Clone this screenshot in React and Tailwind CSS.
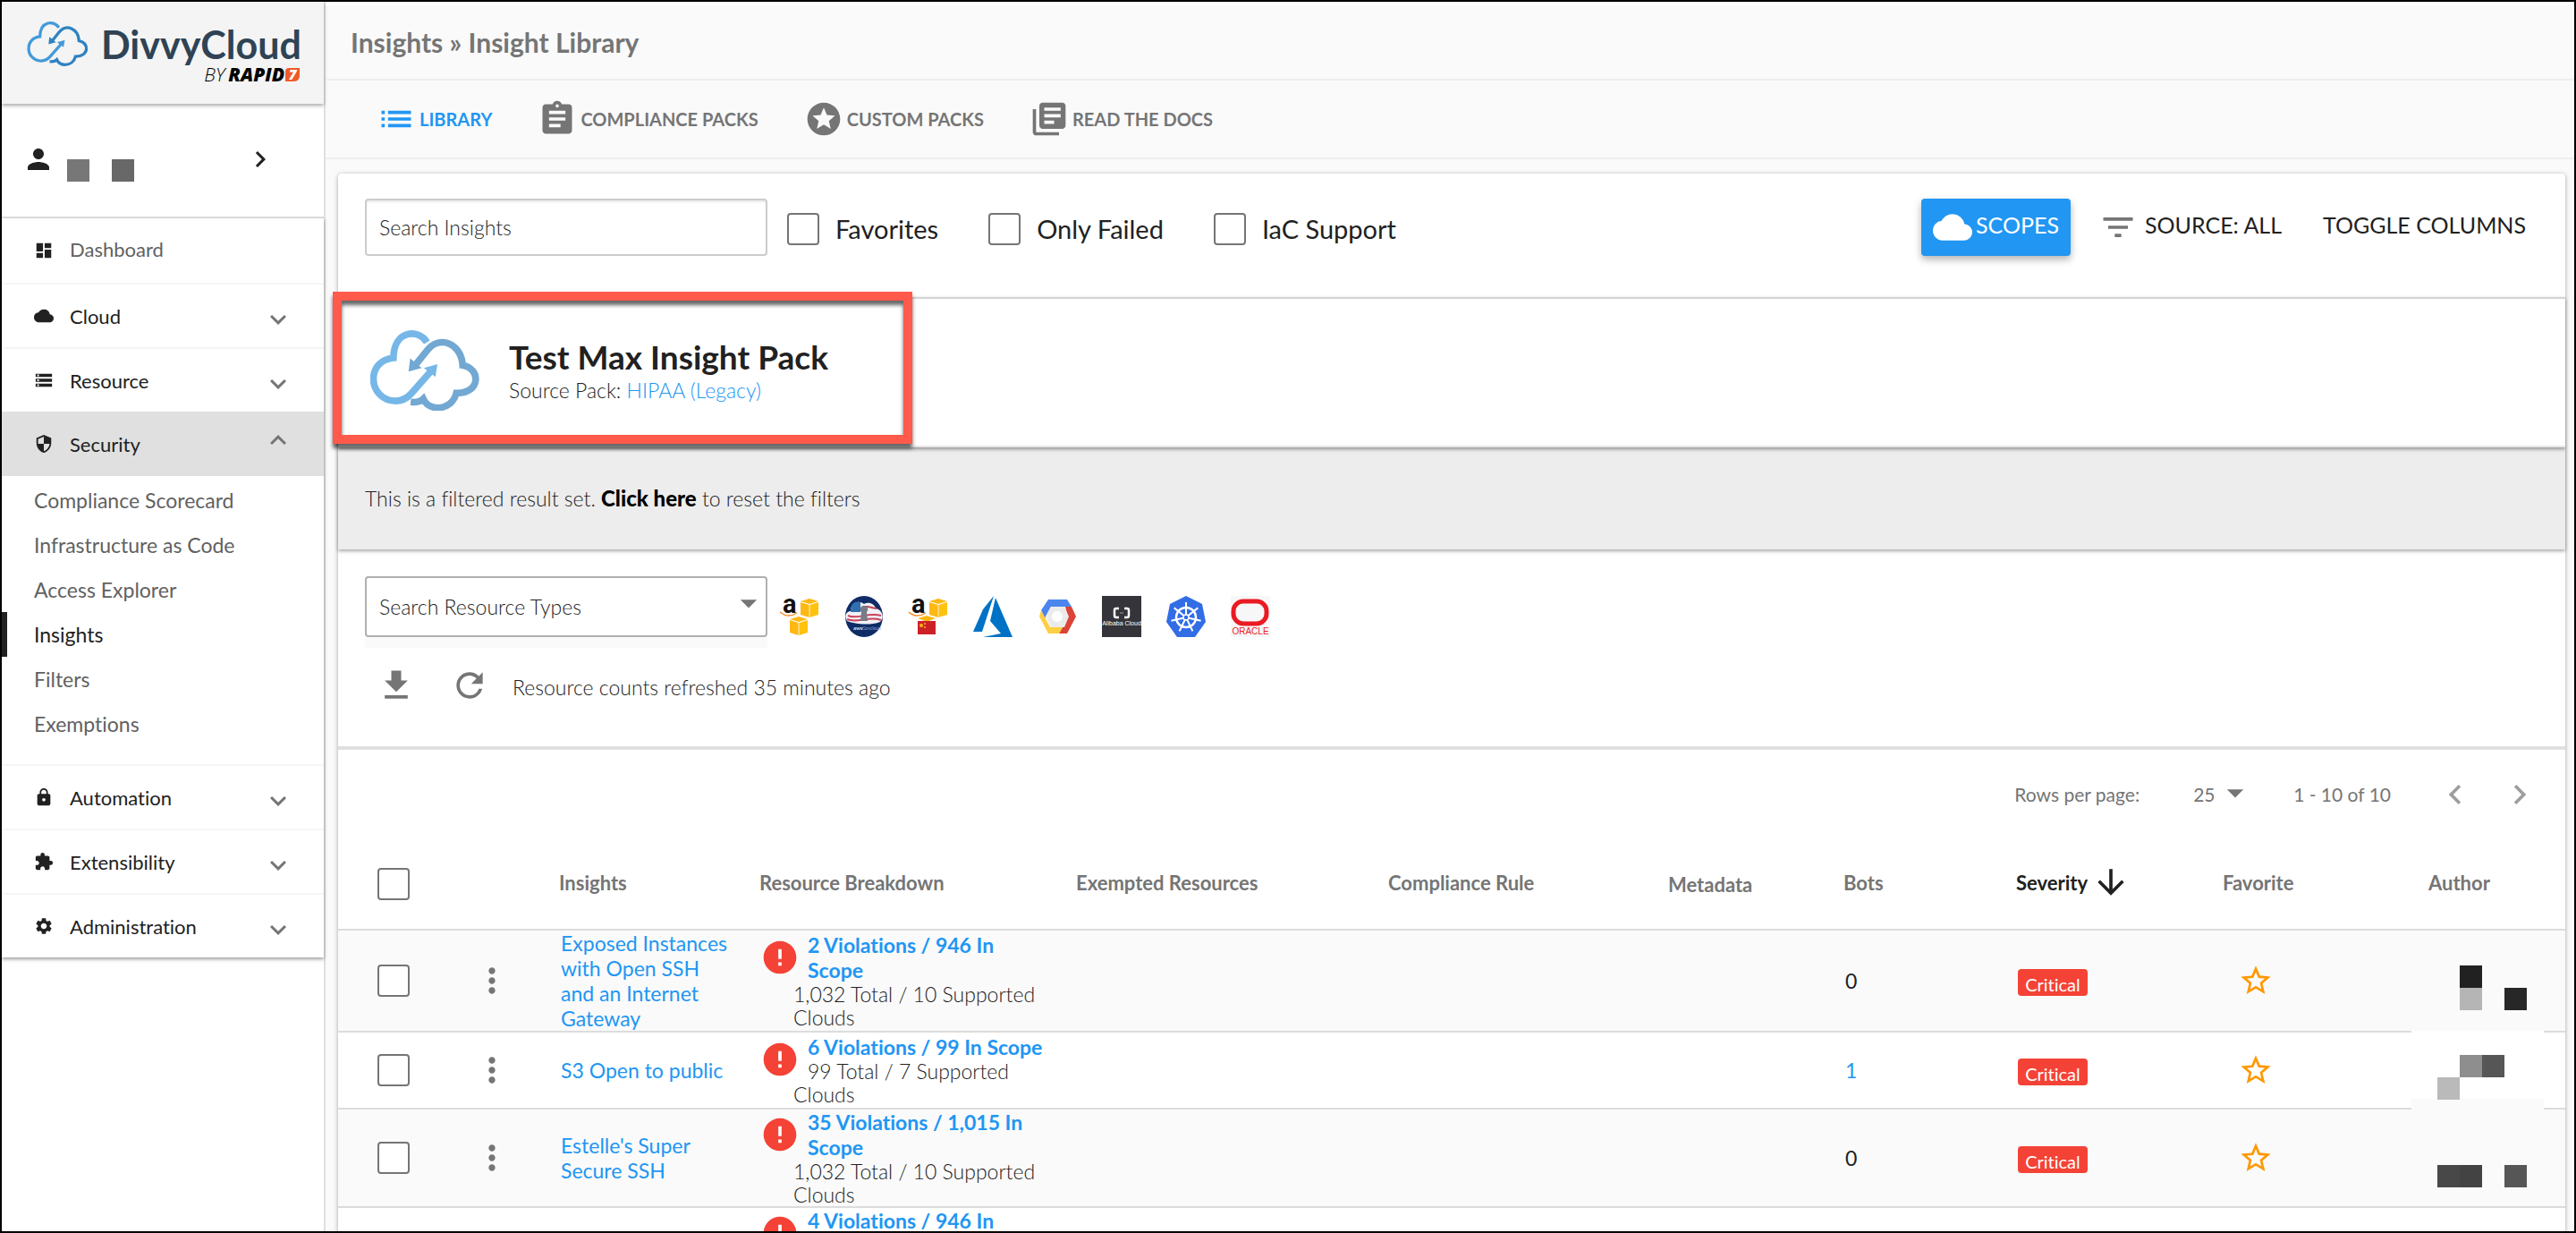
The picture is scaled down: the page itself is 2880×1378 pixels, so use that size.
import { useState } from "react";
import {
  MdArrowDownward,
  MdArrowDropDown,
  MdAssignment,
  MdChevronLeft,
  MdChevronRight,
  MdCloud,
  MdDashboard,
  MdError,
  MdExpandLess,
  MdExpandMore,
  MdExtension,
  MdFileDownload,
  MdFilterList,
  MdLibraryBooks,
  MdList,
  MdLock,
  MdMoreVert,
  MdPerson,
  MdRefresh,
  MdSecurity,
  MdSettings,
  MdStarBorder,
  MdStars,
  MdStorage,
} from "react-icons/md";

const securityLinks = [
  "Compliance Scorecard",
  "Infrastructure as Code",
  "Access Explorer",
  "Insights",
  "Filters",
  "Exemptions",
];

const tabs = [
  { label: "LIBRARY", Icon: MdList, active: true },
  { label: "COMPLIANCE PACKS", Icon: MdAssignment },
  { label: "CUSTOM PACKS", Icon: MdStars },
  { label: "READ THE DOCS", Icon: MdLibraryBooks },
];

const insights = [
  {
    name: "Exposed Instances with Open SSH and an Internet Gateway",
    violations: "2 Violations / 946 In Scope",
    total: "1,032 Total / 10 Supported Clouds",
    bots: 0,
  },
  {
    name: "S3 Open to public",
    violations: "6 Violations / 99 In Scope",
    total: "99 Total / 7 Supported Clouds",
    bots: 1,
  },
  {
    name: "Estelle's Super Secure SSH",
    violations: "35 Violations / 1,015 In Scope",
    total: "1,032 Total / 10 Supported Clouds",
    bots: 0,
  },
  {
    name: "",
    violations: "4 Violations / 946 In Scope",
    total: "1,032 Total / 10 Supported Clouds",
    bots: 0,
  },
];

function CloudLogo({ className, left, right, strokeWidth }) {
  return (
    <svg className={className} viewBox="88 68 208 154" fill="none" strokeWidth={strokeWidth} aria-hidden="true">
      <path d="M196 92 C180 66 133 68 132 122 C109 124 94 140 94 162 C94 185 112 204 136 204 C149 204 158 199 166 190 L203 148" stroke={left} />
      <path d="M216 134 L212 158 L190 141 Z" fill={left} />
      <path d="M172 138 L196 108 C221 76 262 96 264 136 C299 142 299 190 252 189 C248 206 234 217 217 217 C204 217 194 211 189 200 C183 206 175 207 165 206" stroke={right} />
      <path d="M161 148 L164 123 L186 141 Z" fill={right} />
    </svg>
  );
}

function Cube({ x, y }) {
  return (
    <g transform={`translate(${x} ${y})`}>
      <path d="M10 0 L20 3 L10 6 L0 3 Z" fill="#fdb813" />
      <path d="M0 4 L9.6 7 V21 L0 18 Z" fill="#fdb813" />
      <path d="M20 4 L10.4 7 V21 L20 18 Z" fill="#ffc20e" />
    </g>
  );
}

function AmazonMark() {
  return (
    <>
      <text x="3" y="19" fontSize="29" fontWeight="700" fontFamily="Roboto, sans-serif" fill="#111">a</text>
      <path d="M0 18 C6 23 13 23 19 19" stroke="#f08a24" strokeWidth="1.5" fill="none" />
    </>
  );
}

function AwsIcon() {
  return (
    <svg className="w-11 h-[46px] overflow-visible" viewBox="0 0 44 46">
      <AmazonMark />
      <Cube x={23} y={3} />
      <Cube x={11} y={23} />
    </svg>
  );
}

function AwsChinaIcon() {
  return (
    <svg className="w-11 h-[46px] overflow-visible" viewBox="0 0 44 46">
      <AmazonMark />
      <Cube x={23} y={3} />
      <path d="M20 22 L30 25 L20 29 L10 25 Z" fill="#fdb813" />
      <path d="M10 28 H30 V43 H10 Z" fill="#cd2128" />
      <circle cx="14" cy="33" r="2" fill="#fdb813" />
      <circle cx="18" cy="31" r="1" fill="#fdb813" />
      <circle cx="18" cy="35" r="1" fill="#fdb813" />
    </svg>
  );
}

function GovCloudIcon() {
  return (
    <svg className="w-11 h-[46px]" viewBox="0 0 44 46">
      <ellipse cx="22" cy="23" rx="21" ry="23" fill="#0f2c66" />
      <path d="M3 28 C-1 22 3 17 7 17 C7 8 15 4 22 9 C27 6 34 9 35 14 C43 16 45 24 40 29 C30 33 12 32 3 28 Z" fill="#f1f1f6" />
      <path d="M7 17 C7 9 12 6 18 7 V18 H7 Z" fill="#2f6fae" />
      <path d="M20 13 C26 10 31 14 36 14 M4 22 C14 27 26 18 41 22 M3 26 C14 31 28 22 41 27" stroke="#c9425a" strokeWidth="2" fill="none" />
      <path d="M22 11 a4 4 0 0 1 3 7 L26 28 H18 L19 18 A4 4 0 0 1 22 11 Z" fill="#777b84" />
      <text x="10" y="38" fontSize="6" fontWeight="700" fontFamily="Lato, sans-serif" fill="#dfe5f2">aws</text>
      <text x="20" y="38" fontSize="5" fontFamily="Lato, sans-serif" fill="#8fa3cc">Govcloud</text>
    </svg>
  );
}

function AzureIcon() {
  return (
    <svg className="w-11 h-[46px]" viewBox="0 0 44 46">
      <path d="M23 0 L10 40 H0 L11 15 Z" fill="#0072c6" />
      <path d="M25 2 L44 46 H11 L31 42 L19 28 Z" fill="#0072c6" />
    </svg>
  );
}

function GoogleCloudIcon() {
  return (
    <svg className="w-11 h-[46px]" viewBox="0 0 44 46">
      <path d="M12 4 H33 L38 12 H15 L8 25 L4 16 Z" fill="#4a86ee" />
      <path d="M31 12 H38 L43 23 L33 42 H24 L34 24 Z" fill="#db4437" />
      <path d="M4 16 L14 35 H28 L24 42 H12 L2 23 Z" fill="#fdcf41" />
      <path d="M15 12 H30 L35 23 L30 35 H15 L9 23 Z" fill="#ebebeb" />
      <circle cx="22" cy="23" r="6" fill="#fff" />
    </svg>
  );
}

function AlibabaIcon() {
  return (
    <svg className="w-11 h-[46px]" viewBox="0 0 44 46">
      <path d="M0 0 H44 V46 H0 Z" fill="#34343a" />
      <path d="M19 14 H16 Q14 14 14 16 V22 Q14 24 16 24 H19 M25 14 H28 Q30 14 30 16 V22 Q30 24 28 24 H25" stroke="#fff" strokeWidth="2.5" fill="none" />
      <path d="M20 19 H24" stroke="#999" strokeWidth="1" />
      <text x="22" y="33" fontSize="7" textAnchor="middle" fontFamily="Liberation Sans, sans-serif" fill="#fff">Alibaba Cloud</text>
    </svg>
  );
}

function KubernetesIcon() {
  const spokes = [0, 51.4, 102.9, 154.3, 205.7, 257.1, 308.6];
  return (
    <svg className="w-11 h-[46px]" viewBox="0 0 44 46">
      <path d="M22 0 L40 9 L44 29 L32 46 H12 L0 29 L4 9 Z" fill="#326de6" strokeLinejoin="round" />
      <circle cx="22" cy="24" r="11" fill="none" stroke="#fff" strokeWidth="2.5" />
      {spokes.map((deg) => (
        <path key={deg} d="M22 24 V7" stroke="#fff" strokeWidth="2" transform={`rotate(${deg} 22 24)`} />
      ))}
      <circle cx="22" cy="24" r="3" fill="#326de6" stroke="#fff" strokeWidth="1.5" />
    </svg>
  );
}

function OracleIcon() {
  return (
    <svg className="w-11 h-[46px]" viewBox="0 0 44 46">
      <path d="M0 0 H44 V46 H0 Z" fill="#f7f7f7" />
      <rect x="3" y="6" width="37" height="25" rx="11" fill="#f7f7f7" stroke="#ea1b22" strokeWidth="5" />
      <text x="22" y="43" fontSize="10" textAnchor="middle" fontFamily="Liberation Sans, sans-serif" fill="#ea1b22">ORACLE</text>
    </svg>
  );
}

const providers = [
  { name: "AWS", Icon: AwsIcon },
  { name: "AWS GovCloud", Icon: GovCloudIcon },
  { name: "AWS China", Icon: AwsChinaIcon },
  { name: "Azure", Icon: AzureIcon },
  { name: "Google Cloud", Icon: GoogleCloudIcon },
  { name: "Alibaba Cloud", Icon: AlibabaIcon },
  { name: "Kubernetes", Icon: KubernetesIcon },
  { name: "Oracle Cloud", Icon: OracleIcon },
];

function Checkbox(props) {
  return (
    <input
      type="checkbox"
      className="block size-9 shrink-0 appearance-none rounded-sm border-2 border-[#757575] bg-white checked:bg-[#2196f3]"
      {...props}
    />
  );
}

function MenuRow({ label, Icon, open, onClick }) {
  return (
    <button
      type="button"
      onClick={onClick}
      aria-expanded={open}
      className={`flex h-[72px] w-full items-center pl-[36px] pr-[33px] text-[22px] text-[#212121] ${open ? "bg-[#e0e0e0]" : "border-t-2 border-[#f5f5f5]"}`}
    >
      <Icon className="size-[22px] text-[#212121]" />
      <span className="ml-[18px]">{label}</span>
      {open
        ? <MdExpandLess className="ml-auto mb-2 size-9 text-[#757575]" />
        : <MdExpandMore className="ml-auto mt-2 size-9 text-[#757575]" />}
    </button>
  );
}

function Sidebar() {
  const [open, setOpen] = useState(true);

  return (
    <aside className="w-[362px] shrink-0 border-r-2 border-[#e0e0e0] bg-white">
      <div className="flex h-[114px] bg-[#f4f4f4] pl-7 pt-[21px] shadow-[0_2px_4px_rgba(0,0,0,0.35)]">
        <CloudLogo className="h-[51px] w-[69px]" left="#439ad8" right="#2f82c1" strokeWidth="10" />
        <div className="ml-[14px] w-[222px]">
          <div className="text-[43px] font-bold leading-[54px] text-[#2f4355]">DivvyCloud</div>
          <div className="-mt-1 flex items-center justify-end font-['Open_Sans',sans-serif] text-[21px] italic leading-5 text-black">
            <span className="mr-1 font-light">BY</span>
            <span className="font-extrabold">RAPID</span>
            <span className="ml-px h-[15px] w-4 rounded-br-md rounded-tl-sm bg-[#f05a28] text-center text-[15px] font-extrabold leading-[15px] text-white">7</span>
          </div>
        </div>
      </div>

      <button type="button" aria-label="Account" className="flex h-[128px] w-full items-center border-b-2 border-[#e0e0e0] pb-0.5 pl-[23px] pr-[53px]">
        <MdPerson className="size-9 text-[#212121]" />
        <span className="ml-[14px] mt-6 size-[25px] bg-[#777777]" />
        <span className="ml-[25px] mt-6 size-[25px] bg-[#686868]" />
        <MdChevronRight className="ml-auto size-9 text-[#212121]" />
      </button>

      <nav className="shadow-[0_2px_4px_rgba(0,0,0,0.4)]">
        <a href="#dashboard" className="flex h-[72px] items-center pl-[36px] text-[22px] text-[#616161]">
          <MdDashboard className="size-[22px] text-[#212121]" />
          <span className="ml-[18px] pb-1">Dashboard</span>
        </a>
        <MenuRow label="Cloud" Icon={MdCloud} />
        <MenuRow label="Resource" Icon={MdStorage} />
        <MenuRow label="Security" Icon={MdSecurity} open={open} onClick={() => setOpen(!open)} />
        {open && (
          <ul className="pb-5 pt-0.5 text-[23px] text-[#616161]">
            {securityLinks.map((link) => (
              <li key={link}>
                <a
                  href="#security"
                  className={`flex h-[50px] items-center pl-[30px] ${link == "Insights" ? "border-l-[6px] border-[#212121] text-[#212121]" : "border-l-[6px] border-transparent"}`}
                >
                  {link}
                </a>
              </li>
            ))}
          </ul>
        )}
        <MenuRow label="Automation" Icon={MdLock} />
        <MenuRow label="Extensibility" Icon={MdExtension} />
        <MenuRow label="Administration" Icon={MdSettings} />
      </nav>
    </aside>
  );
}

function Toolbar() {
  return (
    <div className="flex h-[138px] items-start pl-[30px] pr-11 pt-7">
      <input
        type="text"
        aria-label="Search Insights"
        placeholder="Search Insights"
        className="h-16 w-[450px] rounded border-2 border-[#cccccc] px-[14px] text-[23px] font-light shadow-[inset_0_2px_2px_rgba(0,0,0,0.08)] placeholder:text-[#212121]"
      />
      <div className="ml-[22px] flex h-16 items-center gap-14 text-[29px] text-[#212121]">
        <label className="flex items-center gap-[18px] pt-1"><Checkbox />Favorites</label>
        <label className="flex items-center gap-[18px] pt-1"><Checkbox />Only Failed</label>
        <label className="flex items-center gap-[18px] pt-1"><Checkbox />IaC Support</label>
      </div>
      <div className="ml-auto flex h-16 items-center text-[25px] text-[#212121]">
        <button type="button" className="flex h-16 items-center gap-1 rounded bg-[#2196f3] px-[13px] text-white shadow-[0_4px_8px_rgba(0,0,0,0.3)]">
          <MdCloud className="size-11" />
          <span className="pb-1">SCOPES</span>
        </button>
        <button type="button" className="ml-[31px] flex items-center gap-2">
          <MdFilterList className="size-11 text-[#757575]" />
          <span className="pb-1">SOURCE: ALL</span>
        </button>
        <button type="button" className="ml-[46px] pb-1">TOGGLE COLUMNS</button>
      </div>
    </div>
  );
}

function PackHeader() {
  return (
    <div className="relative flex h-[168px] items-center border-b-2 border-t-2 border-b-[#e8e8e8] border-t-[#d4d4d4] pb-1.5 pl-9 shadow-[0_2px_4px_rgba(0,0,0,0.4)]">
      <CloudLogo className="h-[91px] w-[122px]" left="#76b7e8" right="#72a8d2" strokeWidth="13" />
      <div className="ml-[33px]">
        <h1 className="text-[37px] font-bold leading-[46px] text-[#212121]">Test Max Insight Pack</h1>
        <p className="text-[23px] font-light leading-7 text-[#212121]">
          Source Pack: <a href="#hipaa" className="text-[#2196f3]">HIPAA (Legacy)</a>
        </p>
      </div>
      {/* highlight frame round the pack title */}
      <div className="pointer-events-none absolute -left-[6px] -top-2 z-10 h-[170px] w-[648px] border-[10px] border-[#ff5a4c] drop-shadow-[0_5px_2px_rgba(0,0,0,0.6)]" />
    </div>
  );
}

function ResourceFilters() {
  return (
    <div className="h-[224px] border-b-4 border-[#e0e0e0] pl-[30px] pt-[30px]">
      <div className="flex">
        <div className="relative h-20 w-[450px] bg-[#fafafa]">
          <select
            aria-label="Search Resource Types"
            className="h-[68px] w-full appearance-none rounded border-2 border-[#b0b0b0] bg-white px-[14px] text-[23px] font-light text-[#212121]"
          >
            <option>Search Resource Types</option>
          </select>
          <MdArrowDropDown className="pointer-events-none absolute -right-px top-2 size-11 text-[#757575]" />
        </div>
        <div className="ml-[14px] mt-[22px] flex gap-7">
          {providers.map(({ name, Icon }) => (
            <button key={name} type="button" aria-label={name} className="h-[46px]"><Icon /></button>
          ))}
        </div>
      </div>
      <div className="mt-5 flex items-center pl-[13px]">
        <button type="button" aria-label="Download"><MdFileDownload className="size-11 text-[#757575]" /></button>
        <button type="button" aria-label="Refresh" className="ml-[38px]"><MdRefresh className="size-11 text-[#757575]" /></button>
        <span className="ml-[26px] pt-1 text-[23px] font-light text-[#212121]">Resource counts refreshed 35 minutes ago</span>
      </div>
    </div>
  );
}

function Pagination() {
  return (
    <div className="flex h-[100px] items-center justify-end pr-[29px] text-[21px] text-[#757575]">
      <label htmlFor="rows">Rows per page:</label>
      <div className="relative ml-[60px]">
        <select id="rows" className="w-[68px] appearance-none bg-transparent">
          <option>25</option>
        </select>
        <MdArrowDropDown className="pointer-events-none absolute -right-px -top-2 size-11" />
      </div>
      <span className="ml-[44px]">1 - 10 of 10</span>
      <button type="button" aria-label="Previous page" className="ml-[50px]"><MdChevronLeft className="size-11 text-[#9e9e9e]" /></button>
      <button type="button" aria-label="Next page" className="ml-7"><MdChevronRight className="size-11 text-[#9e9e9e]" /></button>
    </div>
  );
}

// pixelated author names, a 5 x 2 grid of tiles per row
const authorTiles = [
  ["", "", "bg-[#212121]", "", "", "", "", "bg-[#b5b5b5]", "", "bg-[#272727]"],
  ["", "", "bg-[#8e8e8e]", "bg-[#565656]", "", "", "bg-[#bababa]", "", "", ""],
  ["", "", "", "", "", "", "bg-[#484848]", "bg-[#434343]", "", "bg-[#565656]"],
];

function AuthorTiles({ row }) {
  const tiles = authorTiles[row];
  if (!tiles) return null;
  return (
    <div className="mt-4 grid w-[125px] grid-cols-5">
      {tiles.map((tile, i) => (
        <span key={i} className={`size-[25px] ${tile}`} />
      ))}
    </div>
  );
}

function InsightTable() {
  return (
    <table className="w-full table-fixed border-separate border-spacing-0 text-left">
      <colgroup>
        <col className="w-[130px]" />
        <col className="w-[117px]" />
        <col className="w-[224px]" />
        <col className="w-[354px]" />
        <col className="w-[349px]" />
        <col className="w-[313px]" />
        <col className="w-[196px]" />
        <col className="w-[193px]" />
        <col className="w-[231px]" />
        <col className="w-[211px]" />
        <col className="w-[172px]" />
      </colgroup>
      <thead>
        <tr className="h-[102px] text-[22px] text-[#757575] *:border-b-2 *:border-[#dcdcdc] *:font-bold">
          <th className="pl-11"><Checkbox aria-label="Select all" /></th>
          <th aria-label="Actions" />
          <th className="pb-1">Insights</th>
          <th className="pb-1">Resource Breakdown</th>
          <th className="pb-1">Exempted Resources</th>
          <th className="pb-1">Compliance Rule</th>
          <th>Metadata</th>
          <th className="pb-1">Bots</th>
          <th className="pb-1 text-[#212121]" aria-sort="descending">
            <button type="button" className="flex items-center gap-1">
              Severity
              <MdArrowDownward className="size-11" />
            </button>
          </th>
          <th className="pb-1">Favorite</th>
          <th className="pb-1 pl-[19px]">Author</th>
        </tr>
      </thead>
      <tbody>
        {insights.map((insight, i) => (
          <tr key={i} className="odd:bg-[#fafafa] *:border-b-2 *:border-[#dcdcdc]">
            <td className="pl-11"><Checkbox aria-label="Select insight" /></td>
            <td className="pl-5">
              <button type="button" aria-label="Row menu" className="flex h-[84px] items-center"><MdMoreVert className="size-11 text-[#757575]" /></button>
            </td>
            <td>
              <a href="#insight" className="ml-0.5 block w-[194px] text-[23px] leading-7 text-[#2196f3]">{insight.name}</a>
            </td>
            <td>
              <div className="ml-[38px] w-[284px] text-[23px]">
                <MdError className="float-left -ml-[37px] mr-[9px] mt-[6px] size-11 text-[#f44336]" />
                <a href="#violations" className="block font-bold leading-7 text-[#2196f3]">{insight.violations}</a>
                <p className="font-light leading-[26px] text-[#212121]">{insight.total}</p>
              </div>
            </td>
            <td />
            <td />
            <td />
            <td className="pl-0.5 text-[23px] text-[#212121]">
              {insight.bots ? <a href="#bots" className="text-[#2196f3]">{insight.bots}</a> : insight.bots}
            </td>
            <td className="pl-0.5">
              <span className="mt-1 flex h-[30px] w-[78px] items-center justify-center rounded bg-[#f44336] pt-1 text-[20px] text-white">Critical</span>
            </td>
            <td className="pl-[17px]">
              <button type="button" aria-label="Favorite" className="block"><MdStarBorder className="size-10 text-[#ff9800]" /></button>
            </td>
            <td className="relative">
              {i == 1 && (
                <div className="absolute -top-0.5 left-0 flex h-[88px] w-[148px] flex-col bg-[#fafafa]">
                  <div className="h-[76px] bg-white" />
                </div>
              )}
              <div className="relative pl-1">
                <AuthorTiles row={i} />
              </div>
            </td>
          </tr>
        ))}
      </tbody>
    </table>
  );
}

export default function App() {
  return (
    <div className="flex h-screen overflow-hidden border-2 border-black bg-[#fafafa] font-['Lato',sans-serif] [font-variant-ligatures:no-common-ligatures]">
      <Sidebar />
      <main className="min-w-0 flex-1">
        <header className="flex h-[88px] items-center border-b-2 border-t-4 border-b-[#eeeeee] border-t-white pl-7 text-[30px] font-bold text-[#757575]">
          Insights » Insight Library
        </header>
        <nav className="flex h-[88px] items-center gap-[51px] border-b-2 border-[#eeeeee] pl-[57px] text-[20px] font-bold text-[#757575]">
          {tabs.map(({ label, Icon, active }) => (
            <a key={label} href="#tab" className={`flex items-center gap-1 ${active ? "text-[#2196f3]" : ""}`}>
              <Icon className="size-11" />
              {label}
            </a>
          ))}
        </nav>

        <section className="ml-[14px] mr-[10px] mt-4 rounded-t bg-white shadow-[0_1px_5px_rgba(0,0,0,0.35)]">
          <Toolbar />
          <PackHeader />
          <div className="flex h-[114px] items-center bg-[#ededed] pl-[30px] text-[23px] font-light text-[#212121] shadow-[0_2px_4px_rgba(0,0,0,0.35)]">
            <p>This is a filtered result set. <button type="button" className="text-[24px] font-black text-black">Click here</button> to reset the filters</p>
          </div>
          <ResourceFilters />
          <Pagination />
          <InsightTable />
        </section>
      </main>
    </div>
  );
}
